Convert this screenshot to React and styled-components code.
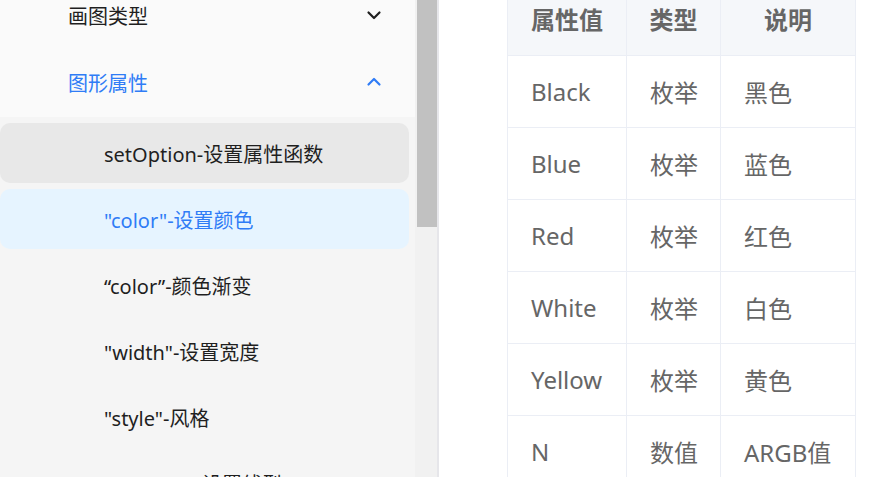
import styled, { createGlobalStyle } from 'styled-components'

const GlobalStyle = createGlobalStyle`
  html, body {
    margin: 0;
    padding: 0;
    height: 100%;
    overflow: hidden;
    background: #ffffff;
  }
  body {
    font-family: "Noto Sans", "Noto Sans CJK SC", sans-serif;
  }
`

const Page = styled.div`
  display: flex;
  height: 477px;
  overflow: hidden;
`

const Sidebar = styled.aside`
  display: flex;
  flex-shrink: 0;
  background: #f5f5f5;
  border-right: 2px solid #e6e6ea;
`

const MenuColumn = styled.nav`
  width: 415px;
  overflow: hidden;
`

const Menu = styled.ul`
  list-style: none;
  margin: -15px 0 0;
  padding: 0;
`

const TopGroup = styled.div`
  background: #fafafa;
  padding-bottom: 5px;
  display: flex;
  flex-direction: column;
  gap: 7px;
`

const TopItem = styled.li`
  display: flex;
  align-items: center;
  justify-content: space-between;
  height: 60px;
  padding: 0 33px 0 68px;
  font-size: 20px;
  color: ${p => (p.$open ? '#2f7cf6' : '#1f1f1f')};
`

const SubMenu = styled.ul`
  list-style: none;
  margin: 0;
  padding: 6px 0;
  display: flex;
  flex-direction: column;
  gap: 6px;
`

const SubItem = styled.li`
  display: flex;
  align-items: center;
  width: 409px;
  height: 60px;
  box-sizing: border-box;
  padding-left: 104px;
  border-radius: 10px;
  font-size: 20px;
  white-space: nowrap;
  color: ${p => (p.$active ? '#2f7cf6' : '#1f1f1f')};
  background: ${p => (p.$active ? '#e6f4ff' : p.$hover ? '#e8e8e8' : 'transparent')};
`

const ScrollTrack = styled.div`
  width: 22px;
  background: #f1f1f1;
  display: flex;
  justify-content: flex-end;
`

const ScrollThumb = styled.div`
  width: 20px;
  height: 227px;
  background: #c1c1c1;
`

const Main = styled.main`
  flex: 1;
  padding-left: 68px;
  background: #ffffff;
`

const Table = styled.table`
  border-collapse: collapse;
  margin-top: -19px;
  font-size: 24px;
  color: #666666;
  table-layout: fixed;
`

const Th = styled.th`
  height: 73px;
  padding: 0;
  background: #f5f7fa;
  border: 1px solid #ebeef5;
  font-weight: 700;
  text-align: center;
  width: ${p => p.$w}px;
`

const Td = styled.td`
  height: 71px;
  padding: 0 0 0 23px;
  border: 1px solid #ebeef5;
  text-align: left;
  white-space: nowrap;
`

function Chevron({ up, color }) {
  return (
    <svg width="16" height="16" viewBox="0 0 16 16" fill="none">
      <path
        d={up ? 'M2.5 10.5 L8 5 L13.5 10.5' : 'M2.5 5.5 L8 11 L13.5 5.5'}
        stroke={color}
        strokeWidth="2.2"
        strokeLinecap="round"
        strokeLinejoin="round"
      />
    </svg>
  )
}

const subItems = [
  { label: 'setOption-设置属性函数', hover: true },
  { label: '"color"-设置颜色', active: true },
  { label: '“color”-颜色渐变' },
  { label: '"width"-设置宽度' },
  { label: '"style"-风格' },
  { label: '“linestyle”-设置线型' },
]

const rows = [
  ['Black', '枚举', '黑色'],
  ['Blue', '枚举', '蓝色'],
  ['Red', '枚举', '红色'],
  ['White', '枚举', '白色'],
  ['Yellow', '枚举', '黄色'],
  ['N', '数值', 'ARGB值'],
]

export default function App() {
  return (
    <>
      <GlobalStyle />
      <Page>
        <Sidebar>
          <MenuColumn>
            <Menu>
              <TopGroup>
                <TopItem>
                  画图类型
                  <Chevron color="#1f1f1f" />
                </TopItem>
                <TopItem $open>
                  图形属性
                  <Chevron up color="#2f7cf6" />
                </TopItem>
              </TopGroup>
              <SubMenu>
                {subItems.map(item => (
                  <SubItem key={item.label} $active={item.active} $hover={item.hover}>
                    {item.label}
                  </SubItem>
                ))}
              </SubMenu>
            </Menu>
          </MenuColumn>
          <ScrollTrack>
            <ScrollThumb />
          </ScrollTrack>
        </Sidebar>
        <Main>
          <Table>
            <thead>
              <tr>
                <Th $w={118}>属性值</Th>
                <Th $w={93}>类型</Th>
                <Th $w={134}>说明</Th>
              </tr>
            </thead>
            <tbody>
              {rows.map(r => (
                <tr key={r[0]}>
                  {r.map((c, i) => (
                    <Td key={i}>{c}</Td>
                  ))}
                </tr>
              ))}
            </tbody>
          </Table>
        </Main>
      </Page>
    </>
  )
}
